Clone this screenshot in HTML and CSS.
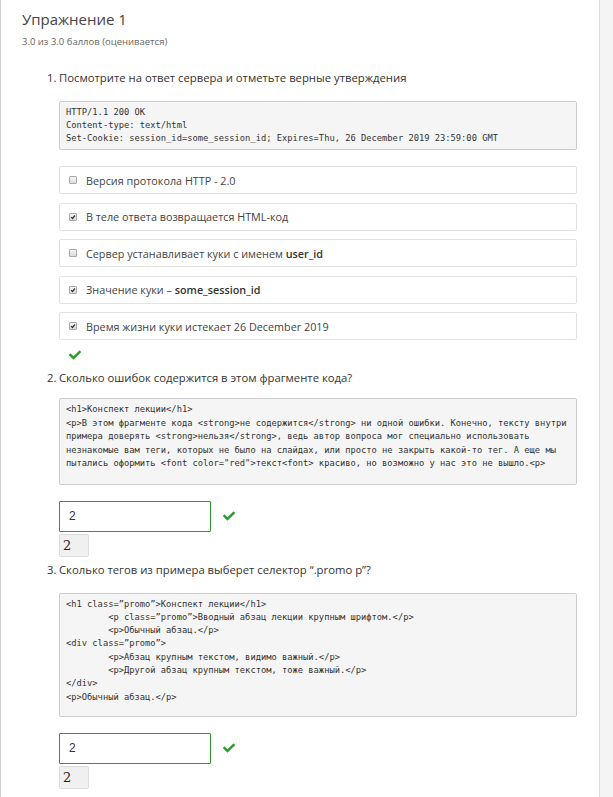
FILE: index.html
```html
<!DOCTYPE html>
<html lang="ru">
<head>
<meta charset="utf-8">
<title>Упражнение 1</title>
<link rel="stylesheet" href="styles.css">
</head>
<body>
<div class="main">
  <header class="head">
    <h1 class="title">Упражнение 1</h1>
    <div class="score">3.0 из 3.0 баллов (оценивается)</div>
  </header>

  <section class="q">
    <div class="q-head"><span class="num">1.</span>Посмотрите на ответ сервера и отметьте верные утверждения</div>
    <pre class="code code1">HTTP/1.1 200 OK
Content-type: text/html
Set-Cookie: session_id=some_session_id; Expires=Thu, 26 December 2019 23:59:00 GMT</pre>
    <div class="options">
      <div class="opt"><span class="cb"></span><span>Версия протокола HTTP - 2.0</span></div>
      <div class="opt"><span class="cb on"><svg viewBox="0 0 8 8"><path d="M1.5 4.2 L3.3 6 L6.6 2" /></svg></span><span>В теле ответа возвращается HTML-код</span></div>
      <div class="opt"><span class="cb"></span><span>Сервер устанавливает куки с именем <b>user_id</b></span></div>
      <div class="opt"><span class="cb on"><svg viewBox="0 0 8 8"><path d="M1.5 4.2 L3.3 6 L6.6 2" /></svg></span><span>Значение куки – <b>some_session_id</b></span></div>
      <div class="opt"><span class="cb on"><svg viewBox="0 0 8 8"><path d="M1.5 4.2 L3.3 6 L6.6 2" /></svg></span><span>Время жизни куки истекает 26 December 2019</span></div>
    </div>
    <svg class="ok ok-q1" viewBox="0 0 512 512"><path d="M173.9 439.4l-166.4-166.4c-10-10-10-26.2 0-36.2l36.2-36.2c10-10 26.2-10 36.2 0L192 312.7 432.1 72.6c10-10 26.2-10 36.2 0l36.2 36.2c10 10 10 26.2 0 36.2l-294.4 294.4c-10 10-26.2 10-36.2 0z"/></svg>
  </section>

  <section class="q">
    <div class="q-head"><span class="num">2.</span>Сколько ошибок содержится в этом фрагменте кода?</div>
    <pre class="code code2">&lt;h1&gt;Конспект лекции&lt;/h1&gt;
&lt;p&gt;В этом фрагменте кода &lt;strong&gt;не содержится&lt;/strong&gt; ни одной ошибки. Конечно, тексту внутри
примера доверять &lt;strong&gt;нельзя&lt;/strong&gt;, ведь автор вопроса мог специально использовать
незнакомые вам теги, которых не было на слайдах, или просто не закрыть какой-то тег. А еще мы
пытались оформить &lt;font color="red"&gt;текст&lt;font&gt; красиво, но возможно у нас это не вышло.&lt;p&gt;</pre>
    <div class="answer">
      <div class="input">2</div>
      <svg class="ok" viewBox="0 0 512 512"><path d="M173.9 439.4l-166.4-166.4c-10-10-10-26.2 0-36.2l36.2-36.2c10-10 26.2-10 36.2 0L192 312.7 432.1 72.6c10-10 26.2-10 36.2 0l36.2 36.2c10 10 10 26.2 0 36.2l-294.4 294.4c-10 10-26.2 10-36.2 0z"/></svg>
    </div>
    <div class="given">2</div>
  </section>

  <section class="q">
    <div class="q-head"><span class="num">3.</span>Сколько тегов из примера выберет селектор “.promo p”?</div>
    <pre class="code code3">&lt;h1 class=”promo”&gt;Конспект лекции&lt;/h1&gt;
        &lt;p class=”promo”&gt;Вводный абзац лекции крупным шрифтом.&lt;/p&gt;
        &lt;p&gt;Обычный абзац.&lt;/p&gt;
&lt;div class=”promo”&gt;
        &lt;p&gt;Абзац крупным текстом, видимо важный.&lt;/p&gt;
        &lt;p&gt;Другой абзац крупным текстом, тоже важный.&lt;/p&gt;
&lt;/div&gt;
&lt;p&gt;Обычный абзац.&lt;/p&gt;</pre>
    <div class="answer">
      <div class="input">2</div>
      <svg class="ok" viewBox="0 0 512 512"><path d="M173.9 439.4l-166.4-166.4c-10-10-10-26.2 0-36.2l36.2-36.2c10-10 26.2-10 36.2 0L192 312.7 432.1 72.6c10-10 26.2-10 36.2 0l36.2 36.2c10 10 10 26.2 0 36.2l-294.4 294.4c-10 10-26.2 10-36.2 0z"/></svg>
    </div>
    <div class="given">2</div>
  </section>
</div>
</body>
</html>
```

FILE: styles.css
```css
html, body {
  margin: 0;
  padding: 0;
}
body {
  background: #f4f4f4;
  font-family: "Open Sans", "Noto Sans", sans-serif;
  color: #444;
  width: 613px;
  height: 797px;
  overflow: hidden;
}
.main {
  width: 598px;
  min-height: 797px;
  background: #fff;
  border-left: 1px solid #cfcfcf;
  border-right: 1px solid #dcdcdc;
  box-sizing: content-box;
}
.head {
  padding: 9px 0 0 21px;
}
.title {
  margin: 0;
  font-size: 15px;
  font-weight: normal;
  line-height: 20px;
  color: #444;
}
.score {
  margin-top: 6px;
  font-size: 9.5px;
  line-height: 14px;
  color: #666;
}
.q {
  padding: 0 22px 0 58px;
}
.q-head {
  font-size: 11.3px;
  line-height: 16px;
  color: #333;
  margin-left: -12px;
}
.num {
  display: inline-block;
  width: 12px;
}
.main > .q:nth-of-type(1) .q-head { margin-top: 21px; }
.main > .q:nth-of-type(2) .q-head { margin-top: 0; }
.main > .q:nth-of-type(3) .q-head { margin-top: 5px; }
.code {
  margin: 15px 0 0;
  background: #f5f5f5;
  border: 1px solid #cccccc;
  border-radius: 2px;
  padding: 4px 6px;
  font-family: "DejaVu Sans Mono", "Liberation Mono", monospace;
  font-size: 8.75px;
  line-height: 13px;
  color: #333;
  white-space: pre;
  overflow: hidden;
}
.code2 {
  margin-top: 12px;
  line-height: 13.5px;
  padding-bottom: 13px;
}
.code3 {
  margin-top: 15px;
  line-height: 13.3px;
  padding-bottom: 12px;
}
.options {
  margin-top: 16px;
  display: flex;
  flex-direction: column;
  gap: 8.5px;
}
.opt {
  height: 26px;
  border: 1px solid #e2e2e2;
  border-radius: 2px;
  display: flex;
  align-items: center;
  padding-left: 9px;
  gap: 9px;
  font-size: 10.8px;
  color: #444;
}
.opt b {
  font-weight: 600;
  color: #333;
}
.cb {
  width: 6px;
  height: 6px;
  border: 1px solid #a9a9a9;
  border-radius: 1px;
  background: linear-gradient(#f4f4f4, #dcdcdc);
  display: inline-flex;
  flex-shrink: 0;
}
.cb svg {
  width: 6px;
  height: 6px;
}
.cb svg path {
  fill: none;
  stroke: #333;
  stroke-width: 1.6;
}
.ok {
  width: 12px;
  height: 12px;
  fill: #2a9a2a;
  display: block;
}
.ok-q1 {
  margin: 9px 0 9px 10px;
}
.answer {
  margin-top: 16px;
  display: flex;
  align-items: center;
  gap: 12px;
}
.input {
  width: 141px;
  height: 29px;
  border: 1px solid #2e9a2e;
  border-radius: 1px;
  padding-left: 9px;
  display: flex;
  align-items: center;
  font-family: "Liberation Sans", sans-serif;
  font-size: 12px;
  color: #333;
}
.given {
  margin-top: 2px;
  width: 28px;
  height: 21px;
  background: #f0f0f0;
  border: 1px solid #dddddd;
  border-radius: 2px;
  font-family: "DejaVu Serif", "Liberation Serif", serif;
  font-size: 13px;
  line-height: 21px;
  text-indent: 3px;
  color: #222;
  box-sizing: content-box;
}
```
